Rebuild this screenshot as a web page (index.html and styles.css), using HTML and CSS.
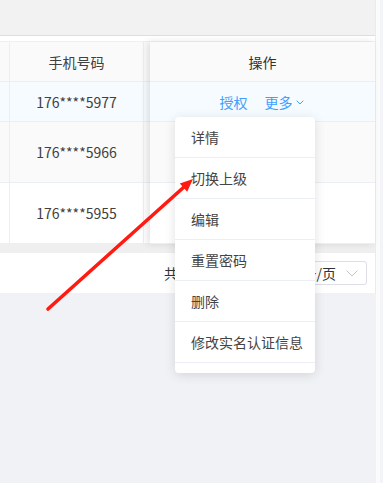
FILE: index.html
```html
<!DOCTYPE html>
<html lang="zh-CN">
<head>
<meta charset="utf-8">
<link rel="stylesheet" href="styles.css">
</head>
<body>
<div class="page">
  <div class="panel">
    <div class="search-card"></div>
    <div class="table">
      <div class="main">
        <div class="row head">
          <div class="cell a"></div>
          <div class="cell b">手机号码</div>
        </div>
        <div class="row r1 hover">
          <div class="cell a"></div>
          <div class="cell b">176****5977</div>
        </div>
        <div class="row r2 stripe">
          <div class="cell a"></div>
          <div class="cell b">176****5966</div>
        </div>
        <div class="row r3">
          <div class="cell a"></div>
          <div class="cell b">176****5955</div>
        </div>
      </div>
      <div class="fixed">
        <div class="row head"><div class="cell c">操作</div></div>
        <div class="row r1 hover">
          <div class="cell c ops">
            <span class="link">授权</span>
            <span class="link more">更多<svg class="chev" viewBox="0 0 8 5" width="8" height="5"><path d="M0.7 0.7 L4 4 L7.3 0.7" fill="none" stroke="#409eff" stroke-width="1"/></svg></span>
          </div>
        </div>
        <div class="row r2 stripe"><div class="cell c"></div></div>
        <div class="row r3"><div class="cell c"></div></div>
      </div>
    </div>
    <div class="scrollbar"></div>
    <div class="pagination">
      <span class="total">共 3 条</span>
      <div class="sizes">
        <span>10条/页</span>
        <svg viewBox="0 0 12 7" width="12" height="7"><path d="M0.5 0.5 L6 6 L11.5 0.5" fill="none" stroke="#c0c4cc" stroke-width="1"/></svg>
      </div>
    </div>
  </div>
  <div class="side"></div>
</div>

<ul class="dropdown">
  <li>详情</li>
  <li>切换上级</li>
  <li>编辑</li>
  <li>重置密码</li>
  <li>删除</li>
  <li>修改实名认证信息</li>
</ul>

<svg class="arrow" width="383" height="483" viewBox="0 0 383 483">
  <line x1="48" y1="309" x2="184" y2="187" stroke="#ff1a12" stroke-width="3.6" stroke-linecap="round"/>
  <polygon points="193,179 187.2,191.8 179.8,183.6" fill="#ff1a12"/>
</svg>
</body>
</html>
```

FILE: styles.css
```css
* { box-sizing: border-box; }
html, body {
  margin: 0;
  padding: 0;
  width: 383px;
  height: 483px;
  overflow: hidden;
  background: #f0f2f5;
  font-family: "Noto Sans CJK SC", "Noto Sans", sans-serif;
  font-size: 14px;
  color: #333;
}
.page {
  display: flex;
  align-items: flex-start;
  height: 483px;
}
.panel {
  width: 376px;
  background: #fff;
  border-right: 1px solid #ebebeb;
  display: flex;
  flex-direction: column;
}
.side {
  flex: 1;
  align-self: stretch;
  background: linear-gradient(to right, #fbfbfb 0, #fbfbfb 4px, #f3f4f7 4px);
}
.search-card {
  height: 36px;
  background: #f2f2f2;
  border-bottom: 1px solid #dedede;
  margin-bottom: 5px;
}
.table {
  display: flex;
  border-top: 1px solid #f0f0f0;
}
.main {
  flex: 1;
}
.fixed {
  width: 225px;
  position: relative;
  box-shadow: -3px 0 7px rgba(0,0,0,0.11);
  z-index: 1;
}
.row {
  display: flex;
  border-bottom: 1px solid #ebeef5;
  background: #fff;
}
.row.head { height: 40px; background: #fafafa; color: #303133; }
.row.r1 { height: 40px; }
.row.r2 { height: 61px; }
.row.r3 { height: 61px; }
.row.hover { background: #f5fbff; }
.row.stripe { background: #fafafa; }
.cell {
  display: flex;
  align-items: center;
  justify-content: center;
}
.cell.a { width: 10px; border-right: 1px solid #ebeef5; }
.cell.b { width: 134px; border-right: 1px solid #ebeef5; color: #404040; }
.cell.c { flex: 1; }
.ops { gap: 17px; padding-right: 2px; }
.link { color: #409eff; display: inline-flex; align-items: center; }
.chev { margin-left: 3px; margin-top: 2px; }
.scrollbar {
  height: 9px;
  background: #efefef;
}
.pagination {
  height: 40px;
  display: flex;
  align-items: center;
  justify-content: flex-end;
  padding-right: 8px;
  font-size: 14px;
  color: #606266;
}
.total { margin-right: 66px; color: #333; }
.sizes {
  width: 95px;
  height: 24px;
  border: 1px solid #dcdfe6;
  border-radius: 3px;
  display: flex;
  align-items: center;
  justify-content: flex-end;
  gap: 10px;
  padding-right: 8px;
  color: #333;
}
.dropdown {
  position: absolute;
  left: 175px;
  top: 117px;
  width: 140px;
  margin: 0;
  padding: 0 0 10px 0;
  list-style: none;
  background: #fff;
  border-radius: 4px;
  box-shadow: 0 2px 12px rgba(0,0,0,0.12);
  z-index: 5;
}
.dropdown li {
  height: 41px;
  line-height: 40px;
  padding-left: 16px;
  border-bottom: 1px solid #ebeef5;
  color: #444;
  font-size: 14px;
  white-space: nowrap;
}
.arrow {
  position: absolute;
  left: 0;
  top: 0;
  z-index: 10;
  pointer-events: none;
}
```
